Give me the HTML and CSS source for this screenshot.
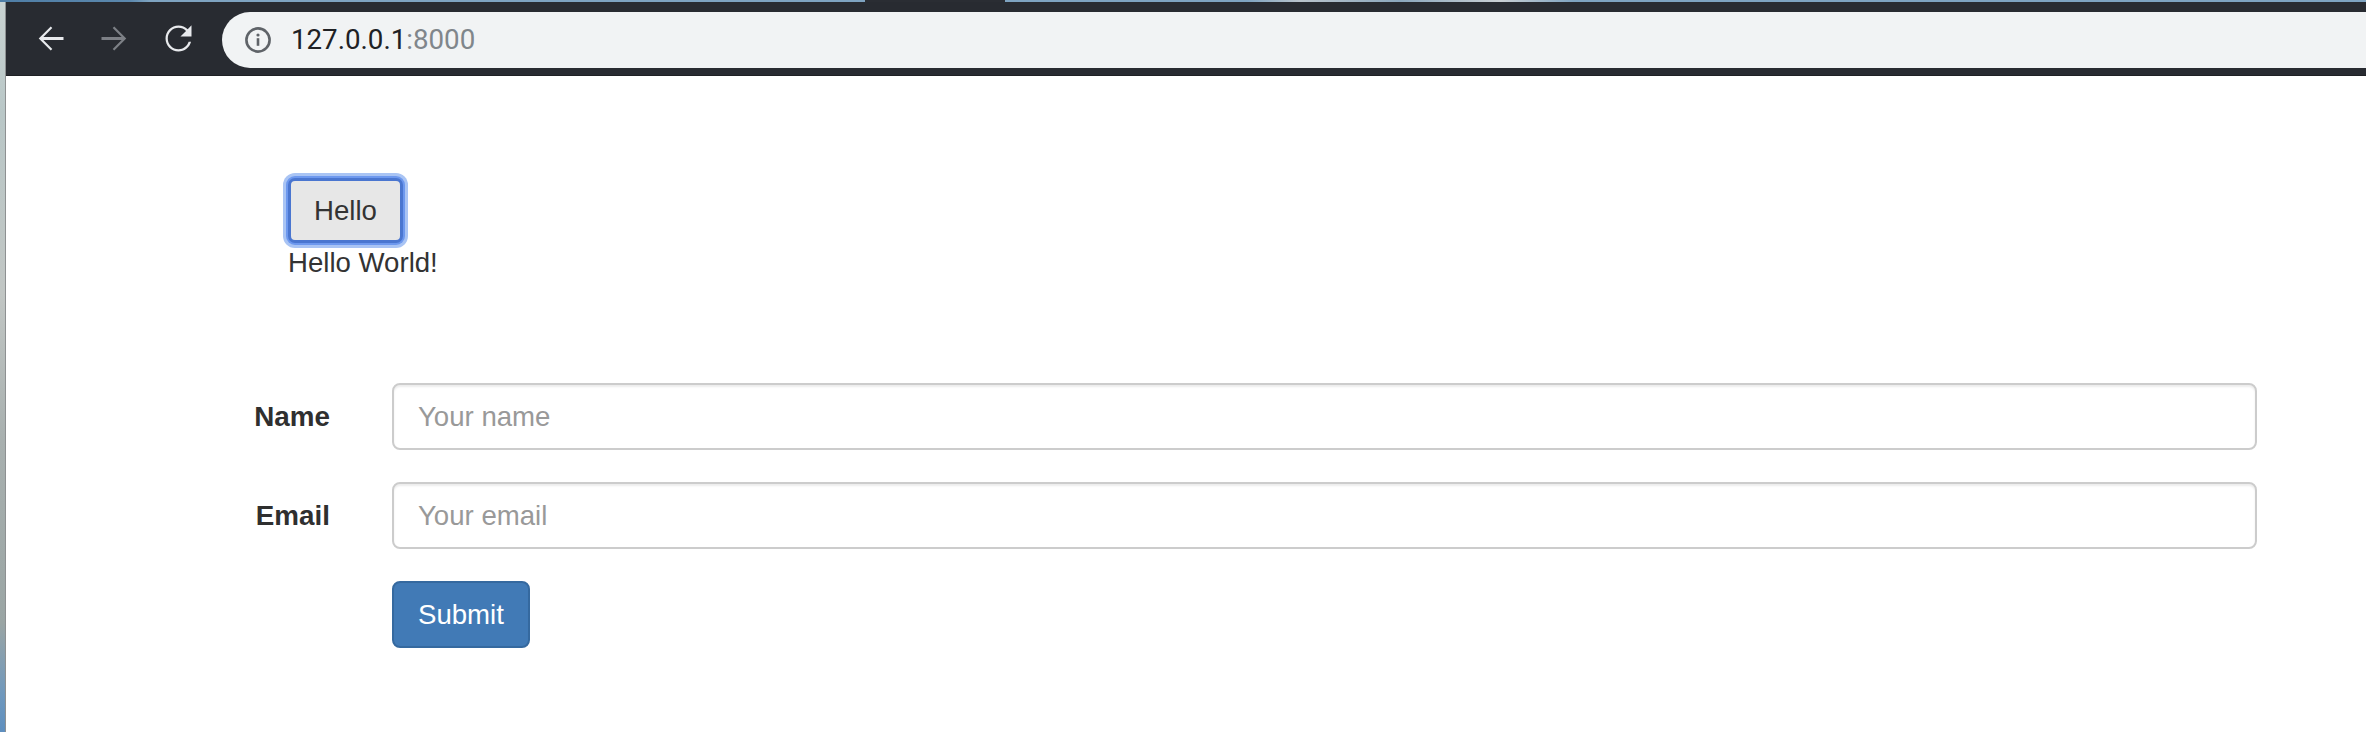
FILE: index.html
```html
<!DOCTYPE html>
<html>
<head>
<meta charset="utf-8">
<title>127.0.0.1:8000</title>
<link rel="stylesheet" href="styles.css">
</head>
<body>
<div class="desk-top"></div>
<div class="desk-row">
  <div class="desk-left"></div>
  <div class="window">
    <div class="toolbar">
      <div class="nav-btn">
        <svg viewBox="0 0 24 24" width="39" height="39"><path fill="#e8eaed" d="M20 11.05H7.6l5.5-5.5L12.15 4.6 4.75 12l7.4 7.4.95-.95-5.5-5.5H20z"/></svg>
      </div>
      <div class="nav-btn">
        <svg viewBox="0 0 24 24" width="39" height="39"><path fill="#7d8086" d="M4 11.05h12.4l-5.5-5.5.95-.95L19.25 12l-7.4 7.4-.95-.95 5.5-5.5H4z"/></svg>
      </div>
      <div class="nav-btn">
        <svg viewBox="0 0 24 24" width="39" height="39"><path fill="#e8eaed" d="M17.65 6.35C16.2 4.9 14.21 4 12 4c-4.42 0-7.99 3.58-7.99 8s3.57 8 7.99 8c3.73 0 6.84-2.55 7.73-6h-1.5c-.82 2.6-3.3 4.6-6.23 4.6-3.64 0-6.6-2.96-6.6-6.6s2.96-6.6 6.6-6.6c1.82 0 3.45.75 4.65 1.95L13.2 10.7H20V3.9l-2.35 2.45z"/></svg>
      </div>
      <div class="omnibox">
        <svg class="info" viewBox="0 0 26 26" width="26" height="26">
          <circle cx="13" cy="13" r="11.6" fill="none" stroke="#5f6368" stroke-width="2.6"/>
          <rect x="11.7" y="11.2" width="2.6" height="7.6" fill="#5f6368"/>
          <circle cx="13" cy="8" r="1.6" fill="#5f6368"/>
        </svg>
        <span class="url">127.0.0.1<span class="port">:8000</span></span>
      </div>
    </div>
    <div class="content">
      <div class="hello">
        <button class="hello-btn" type="button">Hello</button>
        <div class="hello-text">Hello World!</div>
      </div>
      <form class="form">
        <div class="form-row">
          <label class="form-label" for="name">Name</label>
          <input class="form-input" id="name" type="text" placeholder="Your name">
        </div>
        <div class="form-row">
          <label class="form-label" for="email">Email</label>
          <input class="form-input" id="email" type="text" placeholder="Your email">
        </div>
        <div class="form-row">
          <div class="form-label"></div>
          <button class="submit-btn" type="button">Submit</button>
        </div>
      </form>
    </div>
  </div>
</div>
</body>
</html>
```
FILE: styles.css
```css
html, body {
  margin: 0;
  padding: 0;
  height: 732px;
  overflow: hidden;
  background: #fff;
}

body {
  display: flex;
  flex-direction: column;
  font-family: "Liberation Sans", Arial, sans-serif;
  color: #333;
}

.desk-top {
  height: 2px;
  flex: none;
  background: linear-gradient(to right,
    #4f7ea6 0, #5b88ad 130px, #7ea3c0 150px, #7ea3c0 865px,
    #2a2d33 865px, #2a2d33 1005px,
    #7ea3c0 1005px, #7ea3c0 1247px, #b9c3cb 1300px, #8ba7bd 1400px, #c9cfd3 1500px, #7ea3c0 1574px,
    #7ea3c0 100%);
}

.desk-row {
  flex: 1;
  display: flex;
  min-height: 0;
}

.desk-left {
  width: 5px;
  flex: none;
  border-right: 1px solid #8e9192;
  background: linear-gradient(to bottom,
    #c9d3d2 0, #b9c7c7 15%, #c1c6c4 40%, #a8b0af 60%, #9aa5a4 85%, #6f98bd 95%, #5e8fbf 100%);
}

.window {
  flex: 1;
  display: flex;
  flex-direction: column;
  min-width: 0;
}

.toolbar {
  height: 73px;
  flex: none;
  background: #282b31;
  border-bottom: 1px solid #1e2024;
  display: flex;
  align-items: center;
  gap: 24px;
  padding-left: 24px;
}

.nav-btn {
  width: 40px;
  height: 40px;
  display: flex;
  align-items: center;
  justify-content: center;
  flex: none;
}

.omnibox {
  flex: 1;
  height: 56px;
  margin-top: 3px;
  background: #f1f3f4;
  border-radius: 28px 0 0 28px;
  display: flex;
  align-items: center;
  padding-left: 23px;
}

.info {
  flex: none;
  display: block;
}

.url {
  margin-left: 20px;
  font-family: Roboto, "Liberation Sans", sans-serif;
  font-size: 27.7px;
  color: #202124;
  position: relative;
  top: -1px;
}

.port {
  color: #80868b;
}

.content {
  flex: 1;
  background: #fff;
  padding-top: 102px;
}

.hello {
  display: flex;
  flex-direction: column;
  align-items: flex-start;
  padding-left: 282px;
}

.hello-btn {
  height: 65px;
  padding: 0 23px;
  margin: 0;
  font-family: "Liberation Sans", Arial, sans-serif;
  font-size: 27.6px;
  color: #333;
  background: #e7e7e7;
  border: 3px solid #4a76d0;
  border-radius: 7px;
  box-shadow: 0 0 0 2px #6d98ee, 0 0 0 5px #a9c4f4;
}

.hello-text {
  font-size: 27.6px;
  line-height: 39.4px;
}

.form {
  margin-top: 101px;
  padding-left: 200px;
  padding-right: 109px;
  display: flex;
  flex-direction: column;
  gap: 32px;
}

.form-row {
  display: flex;
  align-items: center;
  gap: 62px;
}

.form-label {
  width: 124px;
  flex: none;
  text-align: right;
  font-weight: bold;
  font-size: 27.8px;
  line-height: 39.4px;
  color: #2f2f2f;
}

.form-input {
  flex: 1;
  min-width: 0;
  height: 67px;
  box-sizing: border-box;
  margin: 0;
  padding: 0 24px;
  font-family: "Liberation Sans", Arial, sans-serif;
  font-size: 27.6px;
  color: #555;
  background: #fff;
  border: 2px solid #cccccc;
  border-radius: 8px;
  box-shadow: inset 0 2px 2px rgba(0, 0, 0, 0.075);
  outline: none;
}

.form-input::placeholder {
  color: #999;
}

.submit-btn {
  height: 67px;
  padding: 0 24px;
  margin: 0;
  font-family: "Liberation Sans", Arial, sans-serif;
  font-size: 27.6px;
  color: #fff;
  background: #417ab6;
  border: 2px solid #35699f;
  border-radius: 8px;
}
```
